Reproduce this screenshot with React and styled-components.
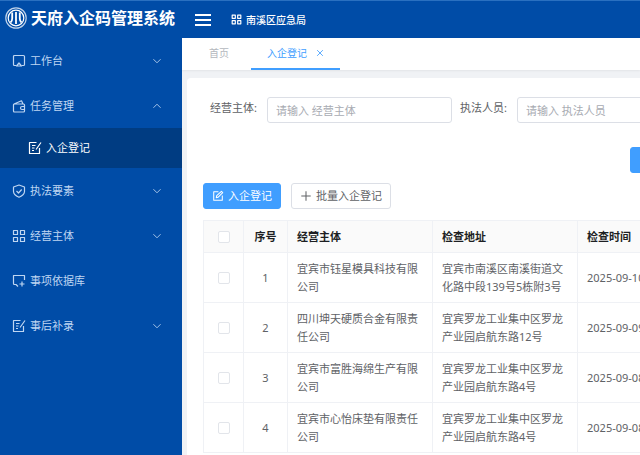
import React from 'react';
import styled, { createGlobalStyle, css } from 'styled-components';

const GlobalStyle = createGlobalStyle`
  *,
  *::before,
  *::after {
    box-sizing: border-box;
  }

  body {
    margin: 0;
    overflow-x: hidden;
    background: #f0f2f5;
    color: #606266;
    font: 11px/18px 'Noto Sans', 'Noto Sans CJK SC', sans-serif;
  }

  button,
  input {
    font: inherit;
  }
`;

const Page = styled.div`
  display: flex;
  flex-direction: column;
  min-height: 100vh;
`;

const Header = styled.header`
  display: flex;
  align-items: center;
  height: 38px;
  border-top: 1px solid #2a70c0;
  background: #004ca7;
  color: #fff;
`;

const Brand = styled.div`
  display: flex;
  flex: none;
  align-items: center;
  gap: 4px;
  width: 182px;
  padding-left: 5px;
  padding-bottom: 3px;
`;

const Title = styled.h1`
  margin: 0;
  font-size: 16px;
  font-weight: 700;
  line-height: 24px;
  white-space: nowrap;
`;

const MenuToggle = styled.button`
  display: flex;
  margin: 0 20px 0 13px;
  padding: 0;
  border: 0;
  background: none;
  color: inherit;
`;

const Department = styled.div`
  display: flex;
  align-items: center;
  gap: 4px;
  font-size: 10px;
  font-weight: 500;
`;

const Body = styled.div`
  display: flex;
  flex: 1;
`;

const Sidebar = styled.nav`
  flex: none;
  width: 182px;
  background: #004ca7;
`;

const MenuItem = styled.a`
  display: flex;
  align-items: center;
  gap: 4px;
  height: 45px;
  padding: 0 20px 0 12px;
  color: #bfd6f2;
  text-decoration: none;

  ${({ $sub }) =>
    $sub &&
    css`
      height: 40px;
      padding-left: 28px;
      background: #003c82;
      color: #fff;
    `}
`;

const MenuLabel = styled.span`
  flex: 1;
`;

const Main = styled.main`
  display: flex;
  flex: 1;
  flex-direction: column;
  gap: 8px;
  min-width: 0;
`;

const Tabs = styled.div`
  display: flex;
  gap: 6px;
  height: 32px;
  padding-left: 11px;
  background: #fff;
  box-shadow: 0 1px 2px rgba(0, 0, 0, 0.06);
  font-size: 10px;
`;

const Tab = styled.div`
  display: flex;
  align-items: center;
  gap: 9px;
  padding: 0 16px;
  border-bottom: 2px solid ${({ $active }) => ($active ? '#409eff' : 'transparent')};
  color: ${({ $active }) => ($active ? '#409eff' : '#b4b7bd')};
`;

const TabLink = styled.a`
  color: inherit;
  text-decoration: none;
`;

const CloseButton = styled.button`
  display: flex;
  padding: 0;
  border: 0;
  background: none;
  color: inherit;
`;

const Card = styled.section`
  flex: 1;
  min-width: 0;
  margin-left: 5px;
  padding: 19px 0 0 16px;
  border-radius: 4px 0 0 0;
  background: #fff;
`;

const SearchForm = styled.form`
  display: flex;
  flex-direction: column;
  gap: 24px;
  padding-left: 7px;
  overflow: hidden;
`;

const Fields = styled.div`
  display: flex;
  gap: 8px;
`;

const Field = styled.div`
  display: flex;
  flex: none;
  gap: 9px;
`;

const FieldLabel = styled.label`
  width: 48px;
  line-height: 22px;
  white-space: nowrap;
`;

const TextInput = styled.input`
  width: 185px;
  height: 26px;
  padding: 0 8px;
  border: 1px solid #dcdfe6;
  border-radius: 3px;
  background: #fff;
  color: #606266;

  &::placeholder {
    color: #a8abb2;
    opacity: 1;
  }
`;

const Button = styled.button`
  display: inline-flex;
  flex: none;
  align-items: center;
  gap: 4px;
  height: 26px;
  padding: 0 ${({ $wide }) => ($wide ? 16 : 8)}px;
  border: 1px solid ${({ $primary }) => ($primary ? '#409eff' : '#dcdfe6')};
  border-radius: 3px;
  background: ${({ $primary }) => ($primary ? '#409eff' : '#fff')};
  color: ${({ $primary }) => ($primary ? '#fff' : '#606266')};
  white-space: nowrap;
`;

const FormActions = styled.div`
  display: flex;
  padding-left: 420px;
`;

const Toolbar = styled.div`
  display: flex;
  gap: 10px;
  margin: 10px 0 11px;
`;

const TableWrap = styled.div`
  overflow: hidden;
`;

const Table = styled.table`
  width: 520px;
  border-collapse: collapse;
  table-layout: fixed;
`;

const Cell = styled.td`
  height: 50px;
  padding: 5px 9px;
  border: 1px solid #eff1f5;
  text-align: ${({ $center }) => ($center ? 'center' : 'left')};
`;

const HeadCell = styled(Cell).attrs({ as: 'th', scope: 'col' })`
  height: 32px;
  background: #fafafa;
  color: #1d1f23;
  font-weight: 700;
`;

const Checkbox = styled.input.attrs({ type: 'checkbox' })`
  display: block;
  width: 12px;
  height: 12px;
  margin: 0 auto;
  border: 1px solid #e2e5ea;
  border-radius: 2px;
  background: #fff;
  appearance: none;
`;

const Svg = styled.svg`
  flex: none;
  fill: none;
  stroke: currentColor;
  stroke-linejoin: round;
  stroke-width: ${({ $weight }) => $weight || 1.2};
`;

const paths = {
  monitor: 'M4 11.5H2.5a1 1 0 0 1-1-1v-8a1 1 0 0 1 1-1h9a1 1 0 0 1 1 1v8a1 1 0 0 1-1 1H10M4.5 12 7 9l2.5 3z',
  wallet:
    'M2.5 5h9a1 1 0 0 1 1 1v6a1 1 0 0 1-1 1h-9a1 1 0 0 1-1-1V6a1 1 0 0 1 1-1zM2 5l7.5-3.2L11 5M12.5 7.5H10a1.5 1.5 0 0 0 0 3h2.5',
  edit: 'M8.5 1.5h-7v11h10V7M4 4.5h3.5M4 7h2.5M4 9.500h2M13 1.500 8 8.500',
  shield: 'M7 1l5.500 2v4.500C12.500 10 10 12 7 13.200 4 12 1.500 10 1.500 7.500V3zM4.500 7l2 2 3.200-3.500',
  grid: 'M1.5 1.5h4v4h-4zM8.5 1.5h4v4h-4zM1.5 8.5h4v4h-4zM8.5 8.5h4v4h-4z',
  board: 'M6 12.500 4 10.500H2.500a1 1 0 0 1-1-1v-8h11V6M10 7.500v5M7.500 10h5',
  pencil: 'M7.5 2H2v10h10V6.500M5 9l.5-2.500 5.500-5L12.500 3l-5.500 5.500z',
  plus: 'M7 1.5v11M1.5 7h11',
  close: 'M2 2l10 10M12 2 2 12',
  down: 'M2 4.5l5 5 5-5',
  up: 'M2 9.5l5-5 5 5',
};

const Icon = ({ name, size = 14, weight }) => (
  <Svg width={size} height={size} viewBox="0 0 14 14" $weight={weight} aria-hidden="true">
    <path d={paths[name]} />
  </Svg>
);

const Logo = () => (
  <Svg width="22" height="22" viewBox="0 0 22 22" aria-hidden="true">
    <circle cx="11" cy="11" r="10.2" opacity="0.75" />
    <circle cx="11" cy="11" r="7.8" />
    <path d="M7.2 5.5v6q0 2.500-1.700 4M11 5v12M14.800 5.500v6q0 2.500 1.700 4" strokeWidth="1.8" />
  </Svg>
);

const menu = [
  { label: '工作台', icon: 'monitor', arrow: 'down' },
  { label: '任务管理', icon: 'wallet', arrow: 'up' },
  { label: '入企登记', icon: 'edit', sub: true },
  { label: '执法要素', icon: 'shield', arrow: 'down' },
  { label: '经营主体', icon: 'grid', arrow: 'down' },
  { label: '事项依据库', icon: 'board' },
  { label: '事后补录', icon: 'edit', arrow: 'down' },
];

const rows = [
  ['宜宾市钰星模具科技有限公司', '宜宾市南溪区南溪街道文化路中段139号5栋附3号', '2025-09-10'],
  ['四川坤天硬质合金有限责任公司', '宜宾罗龙工业集中区罗龙产业园启航东路12号', '2025-09-09'],
  ['宜宾市富胜海绵生产有限公司', '宜宾罗龙工业集中区罗龙产业园启航东路4号', '2025-09-08'],
  ['宜宾市心怡床垫有限责任公司', '宜宾罗龙工业集中区罗龙产业园启航东路4号', '2025-09-08'],
];

export default function App() {
  return (
    <Page>
      <GlobalStyle />

      <Header>
        <Brand>
          <Logo />
          <Title>天府入企码管理系统</Title>
        </Brand>
        <MenuToggle type="button" aria-label="菜单">
          <Svg width="16" height="12" viewBox="0 0 16 12" $weight={2}>
            <path d="M0 1h16M0 6h16M0 11h16" />
          </Svg>
        </MenuToggle>
        <Department>
          <Icon name="grid" size={11} weight={1.5} />
          南溪区应急局
        </Department>
      </Header>

      <Body>
        <Sidebar>
          {menu.map(({ label, icon, arrow, sub }) => (
            <MenuItem key={label} href="#" $sub={sub}>
              <Icon name={icon} />
              <MenuLabel>{label}</MenuLabel>
              {arrow && <Icon name={arrow} size={10} />}
            </MenuItem>
          ))}
        </Sidebar>

        <Main>
          <Tabs>
            <Tab>
              <TabLink href="#">首页</TabLink>
            </Tab>
            <Tab $active>
              <TabLink href="#">入企登记</TabLink>
              <CloseButton type="button" aria-label="关闭">
                <Icon name="close" size={8} weight={1.5} />
              </CloseButton>
            </Tab>
          </Tabs>

          <Card>
            <SearchForm>
              <Fields>
                <Field>
                  <FieldLabel htmlFor="company">经营主体:</FieldLabel>
                  <TextInput id="company" placeholder="请输入 经营主体" />
                </Field>
                <Field>
                  <FieldLabel htmlFor="officer">执法人员:</FieldLabel>
                  <TextInput id="officer" placeholder="请输入 执法人员" />
                </Field>
              </Fields>
              <FormActions>
                <Button type="submit" aria-label="搜索" $primary $wide />
              </FormActions>
            </SearchForm>

            <Toolbar>
              <Button type="button" $primary>
                <Icon name="pencil" size={12} />
                入企登记
              </Button>
              <Button type="button">
                <Icon name="plus" size={12} />
                批量入企登记
              </Button>
            </Toolbar>

            <TableWrap>
              <Table>
                <colgroup>
                  <col width="40" />
                  <col width="44" />
                  <col width="145" />
                  <col width="145" />
                  <col />
                </colgroup>
                <thead>
                  <tr>
                    <HeadCell $center>
                      <Checkbox aria-label="全选" />
                    </HeadCell>
                    <HeadCell $center>序号</HeadCell>
                    <HeadCell>经营主体</HeadCell>
                    <HeadCell>检查地址</HeadCell>
                    <HeadCell>检查时间</HeadCell>
                  </tr>
                </thead>
                <tbody>
                  {rows.map(([company, address, date], i) => (
                    <tr key={company}>
                      <Cell $center>
                        <Checkbox aria-label={company} />
                      </Cell>
                      <Cell $center>{i + 1}</Cell>
                      <Cell>{company}</Cell>
                      <Cell>{address}</Cell>
                      <Cell>{date}</Cell>
                    </tr>
                  ))}
                </tbody>
              </Table>
            </TableWrap>
          </Card>
        </Main>
      </Body>
    </Page>
  );
}
